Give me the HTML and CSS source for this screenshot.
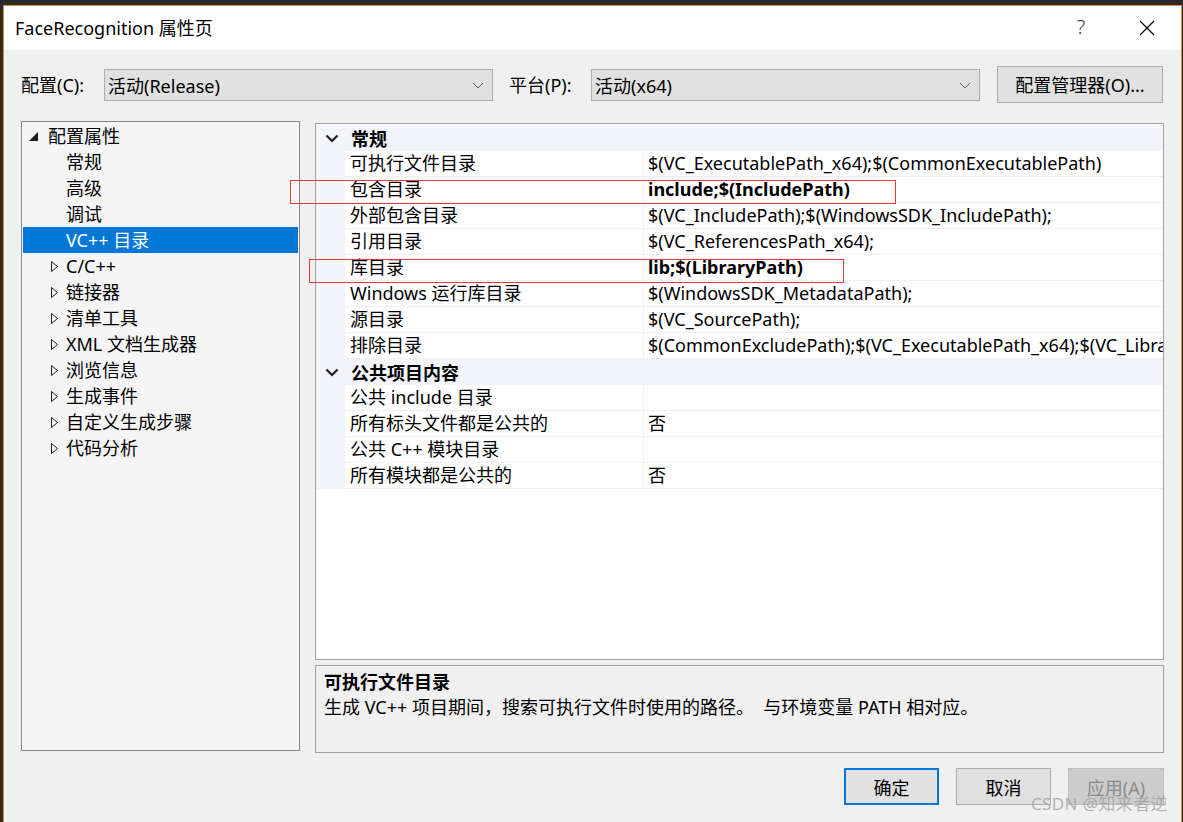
FILE: index.html
```html
<!DOCTYPE html>
<html lang="zh-CN">
<head>
<meta charset="utf-8">
<title>FaceRecognition 属性页</title>
<link rel="stylesheet" href="styles.css">
</head>
<body>
<div class="window">
  <div class="titlebar">
    <span class="title">FaceRecognition 属性页</span>
    <span class="tb-help">?</span>
    <span class="tb-close">
      <svg width="16" height="16" viewBox="0 0 16 16"><path d="M1 1L15 15M15 1L1 15" stroke="#000" stroke-width="1.1" fill="none"/></svg>
    </span>
  </div>
  <div class="content">
    <div class="config-row">
      <span class="cfg-label">配置(C):</span>
      <div class="combo"><span>活动(Release)</span><svg class="chev" width="12" height="7" viewBox="0 0 12 7"><path d="M1 1L6 6L11 1" stroke="#606060" stroke-width="1" fill="none"/></svg></div>
      <span class="cfg-label plat">平台(P):</span>
      <div class="combo"><span>活动(x64)</span><svg class="chev" width="12" height="7" viewBox="0 0 12 7"><path d="M1 1L6 6L11 1" stroke="#606060" stroke-width="1" fill="none"/></svg></div>
      <button class="btn cfg-btn">配置管理器(O)...</button>
    </div>
    <div class="main">
      <div class="tree">
        <div class="node root"><svg class="exp" width="10" height="9" viewBox="0 0 10 9"><polygon points="0,9 9,9 9,0" fill="#1e1e1e"/></svg><span>配置属性</span></div>
        <div class="node child">常规</div>
        <div class="node child">高级</div>
        <div class="node child">调试</div>
        <div class="node child selected">VC++ 目录</div>
        <div class="node coll"><svg class="col" width="8" height="11" viewBox="0 0 8 11"><polygon points="0.5,0.5 6.5,5.5 0.5,10.5" fill="none" stroke="#1e1e1e" stroke-width="1"/></svg><span>C/C++</span></div>
        <div class="node coll"><svg class="col" width="8" height="11" viewBox="0 0 8 11"><polygon points="0.5,0.5 6.5,5.5 0.5,10.5" fill="none" stroke="#1e1e1e" stroke-width="1"/></svg><span>链接器</span></div>
        <div class="node coll"><svg class="col" width="8" height="11" viewBox="0 0 8 11"><polygon points="0.5,0.5 6.5,5.5 0.5,10.5" fill="none" stroke="#1e1e1e" stroke-width="1"/></svg><span>清单工具</span></div>
        <div class="node coll"><svg class="col" width="8" height="11" viewBox="0 0 8 11"><polygon points="0.5,0.5 6.5,5.5 0.5,10.5" fill="none" stroke="#1e1e1e" stroke-width="1"/></svg><span>XML 文档生成器</span></div>
        <div class="node coll"><svg class="col" width="8" height="11" viewBox="0 0 8 11"><polygon points="0.5,0.5 6.5,5.5 0.5,10.5" fill="none" stroke="#1e1e1e" stroke-width="1"/></svg><span>浏览信息</span></div>
        <div class="node coll"><svg class="col" width="8" height="11" viewBox="0 0 8 11"><polygon points="0.5,0.5 6.5,5.5 0.5,10.5" fill="none" stroke="#1e1e1e" stroke-width="1"/></svg><span>生成事件</span></div>
        <div class="node coll"><svg class="col" width="8" height="11" viewBox="0 0 8 11"><polygon points="0.5,0.5 6.5,5.5 0.5,10.5" fill="none" stroke="#1e1e1e" stroke-width="1"/></svg><span>自定义生成步骤</span></div>
        <div class="node coll"><svg class="col" width="8" height="11" viewBox="0 0 8 11"><polygon points="0.5,0.5 6.5,5.5 0.5,10.5" fill="none" stroke="#1e1e1e" stroke-width="1"/></svg><span>代码分析</span></div>
      </div>
      <div class="right">
        <div class="grid">
          <div class="cat"><svg class="catchev" width="14" height="9" viewBox="0 0 14 9"><path d="M1.5 1.5L7 7L12.5 1.5" stroke="#1e1e1e" stroke-width="2.2" fill="none"/></svg><span>常规</span></div>
          <div class="prop"><div class="gut"></div><div class="name">可执行文件目录</div><div class="val">$(VC_ExecutablePath_x64);$(CommonExecutablePath)</div></div>
          <div class="prop"><div class="gut"></div><div class="name">包含目录</div><div class="val bold">include;$(IncludePath)</div></div>
          <div class="prop"><div class="gut"></div><div class="name">外部包含目录</div><div class="val">$(VC_IncludePath);$(WindowsSDK_IncludePath);</div></div>
          <div class="prop"><div class="gut"></div><div class="name">引用目录</div><div class="val">$(VC_ReferencesPath_x64);</div></div>
          <div class="prop"><div class="gut"></div><div class="name">库目录</div><div class="val bold">lib;$(LibraryPath)</div></div>
          <div class="prop"><div class="gut"></div><div class="name">Windows 运行库目录</div><div class="val">$(WindowsSDK_MetadataPath);</div></div>
          <div class="prop"><div class="gut"></div><div class="name">源目录</div><div class="val">$(VC_SourcePath);</div></div>
          <div class="prop"><div class="gut"></div><div class="name">排除目录</div><div class="val">$(CommonExcludePath);$(VC_ExecutablePath_x64);$(VC_LibraryPath_x64);</div></div>
          <div class="cat"><svg class="catchev" width="14" height="9" viewBox="0 0 14 9"><path d="M1.5 1.5L7 7L12.5 1.5" stroke="#1e1e1e" stroke-width="2.2" fill="none"/></svg><span>公共项目内容</span></div>
          <div class="prop"><div class="gut"></div><div class="name">公共 include 目录</div><div class="val"></div></div>
          <div class="prop"><div class="gut"></div><div class="name">所有标头文件都是公共的</div><div class="val">否</div></div>
          <div class="prop"><div class="gut"></div><div class="name">公共 C++ 模块目录</div><div class="val"></div></div>
          <div class="prop"><div class="gut"></div><div class="name">所有模块都是公共的</div><div class="val">否</div></div>
          <div class="mark mark1"></div>
          <div class="mark mark2"></div>
        </div>
        <div class="desc">
          <div class="desc-title">可执行文件目录</div>
          <div class="desc-text">生成 VC++ 项目期间，搜索可执行文件时使用的路径。&nbsp; 与环境变量 PATH 相对应。</div>
        </div>
      </div>
    </div>
    <div class="buttons">
      <button class="btn ok">确定</button>
      <button class="btn">取消</button>
      <button class="btn disabled">应用(A)</button>
    </div>
  </div>
  <div class="watermark">CSDN @知来者逆</div>
</div>
</body>
</html>
```
FILE: styles.css
```css
* { box-sizing: border-box; }
html, body { margin: 0; padding: 0; }
body {
  background: #2b2b2b;
  width: 1183px;
  height: 822px;
  overflow: hidden;
  font-family: "Noto Sans", "Noto Sans CJK SC", sans-serif;
  font-size: 18px;
  color: #000;
}
.window {
  position: relative;
  margin: 5px 0 0 3px;
  width: 1179px;
  height: 817px;
  border: 1px solid #e38a1d;
  border-bottom: none;
  background: #f0f0f0;
  display: flex;
  flex-direction: column;
}
.titlebar {
  height: 44px;
  background: #fff;
  display: flex;
  align-items: center;
  padding-left: 11px;
  flex-shrink: 0;
}
.title { flex: 1; font-size: 18px; padding-bottom: 2px; }
.tb-help { font-size: 20px; font-weight: 300; color: #333; width: 70px; text-align: center; padding-bottom: 4px; margin-right: 6px; }
.tb-close { width: 50px; display: flex; justify-content: center; margin-right: 9px; }
.content {
  padding: 16px 17px 0 17px;
  display: flex;
  flex-direction: column;
  flex: 1;
}
.config-row {
  display: flex;
  align-items: center;
  height: 36px;
}
.cfg-label { width: 83px; }
.cfg-label.plat { width: 82px; margin-left: 16px; }
.combo {
  width: 389px;
  height: 32px;
  background: #e1e1e1;
  border: 1px solid #adadad;
  display: flex;
  align-items: center;
  padding-left: 3px;
  padding-right: 8px;
  justify-content: space-between;
  margin-top: 2px;
}
.btn {
  font-family: inherit;
  font-size: 18px;
  color: #000;
  background: #e1e1e1;
  border: 1px solid #adadad;
  padding: 0;
  margin: 0;
}
.cfg-btn { width: 166px; height: 37px; margin-left: 17px; }
.main {
  display: flex;
  margin-top: 19px;
  align-items: flex-start;
}
.tree {
  width: 279px;
  height: 630px;
  border: 1px solid #828790;
  background: #f5f5f5;
  padding: 1px;
}
.node {
  height: 26px;
  line-height: 26px;
  display: flex;
  align-items: center;
  white-space: nowrap;
}
.node.root { padding-left: 6px; }
.node.root .exp { margin-right: 9px; margin-top: 1px; }
.node.child { padding-left: 43px; }
.node.coll { padding-left: 28px; }
.node.coll .col { margin-right: 7px; }
.node.selected { background: #0078d7; color: #fff; }
.right {
  margin-left: 15px;
  margin-top: 2px;
  width: 849px;
  display: flex;
  flex-direction: column;
}
.grid {
  position: relative;
  height: 537px;
  border: 1px solid #a0a0a0;
  background: #fff;
  padding-top: 1px;
}
.cat {
  height: 26px;
  background: #f2f4f9;
  display: flex;
  align-items: center;
  font-weight: bold;
  border-bottom: 1px solid #f2f4f9;
}
.cat .catchev { margin-left: 9px; margin-right: 12px; margin-top: 1px; }
.prop {
  height: 26px;
  display: flex;
  white-space: nowrap;
}
.gut { width: 29px; background: #f2f4f9; flex-shrink: 0; }
.name {
  width: 299px;
  flex-shrink: 0;
  padding-left: 5px;
  line-height: 25px;
  border-bottom: 1px solid #f0f0f0;
  border-right: 1px solid #f0f0f0;
}
.val {
  flex: 1;
  min-width: 0;
  padding-left: 4px;
  line-height: 25px;
  border-bottom: 1px solid #f0f0f0;
  overflow: hidden;
}
.bold { font-weight: bold; }
.mark {
  position: absolute;
  border: 1px solid #e53a3a;
}
.mark1 { left: -26px; top: 56px; width: 606px; height: 24px; }
.mark2 { left: -7px; top: 135px; width: 535px; height: 24px; }
.desc {
  margin-top: 5px;
  height: 88px;
  border: 1px solid #a0a0a0;
  background: #f0f0f0;
  padding: 4px 8px;
}
.desc-title { font-weight: bold; line-height: 25px; }
.desc-text { line-height: 25px; }
.buttons {
  display: flex;
  justify-content: flex-end;
  gap: 17px;
  margin-top: 15px;
  padding-right: 0;
}
.buttons .btn { width: 95px; height: 37px; }
.buttons .btn.ok { border: 2px solid #0078d7; }
.buttons .btn.disabled { width: 96px; background: #cccccc; border-color: #bfbfbf; color: #8a8a8a; }
.watermark {
  position: absolute;
  right: 13px;
  bottom: 7px;
  font-size: 17px;
  color: rgba(160, 160, 160, 0.8);
  letter-spacing: 0.4px;
}
```
